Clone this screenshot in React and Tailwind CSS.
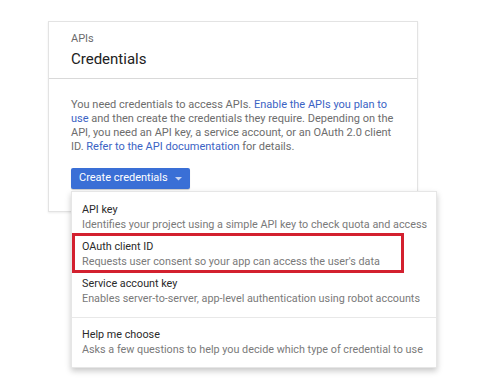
import React from "react";

export default function App() {
  return (
    <div className="relative w-[481px] h-[392px] bg-white overflow-hidden" style={{ fontFamily: "Roboto, 'Liberation Sans', sans-serif" }}>
      <div className="absolute left-[48px] top-[21px] w-[370px] h-[191px] border border-[#e3e3e3] bg-white shadow-[0_1px_2px_rgba(0,0,0,0.08)]">
        <div className="h-[57px] border-b border-[#d9d9d9] pl-[22px] pt-[10px]">
          <div className="text-[11px] leading-[14px] text-[#6b6b6b]">APIs</div>
          <div className="text-[15px] leading-[20px] mt-[3px] text-[#212121]">Credentials</div>
        </div>
        <div className="px-[22px] pt-[19px]">
          <p className="text-[11px] leading-[14px] text-[#6d6d6d] w-[330px]">
            You need credentials to access APIs. <span className="text-[#3b63c4]">Enable the APIs you plan to use</span> and then create the credentials they require. Depending on the API, you need an API key, a service account, or an OAuth 2.0 client ID. <span className="text-[#3b63c4]">Refer to the API documentation</span> for details.
          </p>
          <button className="mt-[14px] h-[21px] w-[119px] rounded-[2px] bg-[#3a6fd6] text-white text-[11px] flex items-center pl-[8px] gap-[7px] shadow-[0_1px_1px_rgba(0,0,0,0.2)]">
            <span>Create credentials</span>
            <svg width="7" height="4" viewBox="0 0 7 4"><path d="M0 0h7L3.5 3.5z" fill="#c9d6f3" /></svg>
          </button>
        </div>
      </div>

      <div className="absolute left-[71px] top-[191px] w-[366px] h-[177px] bg-white border border-[#e6e6e6] shadow-[0_3px_6px_rgba(0,0,0,0.22)] pt-[6px]">
        {[
          ["API key", "Identifies your project using a simple API key to check quota and access"],
          ["OAuth client ID", "Requests user consent so your app can access the user's data"],
          ["Service account key", "Enables server-to-server, app-level authentication using robot accounts"],
        ].map(([t, d]) => (
          <div key={t} className="px-[10px] py-[3.5px]">
            <div className="text-[10.8px] leading-[15px] text-[#2a2a2a]">{t}</div>
            <div className="text-[10.8px] leading-[15px] text-[#7a7a7a] whitespace-nowrap">{d}</div>
          </div>
        ))}
        <div className="mt-[8px] border-t border-[#e8e8e8]" />
        <div className="px-[10px] pt-[8.5px]">
          <div className="text-[10.8px] leading-[15px] text-[#2a2a2a]">Help me choose</div>
          <div className="text-[10.8px] leading-[15px] text-[#7a7a7a] whitespace-nowrap">Asks a few questions to help you decide which type of credential to use</div>
        </div>
        <div className="absolute left-[0px] top-[41px] w-[332px] h-[40px] border-[3px] border-[#d3202f]" />
      </div>
    </div>
  );
}
